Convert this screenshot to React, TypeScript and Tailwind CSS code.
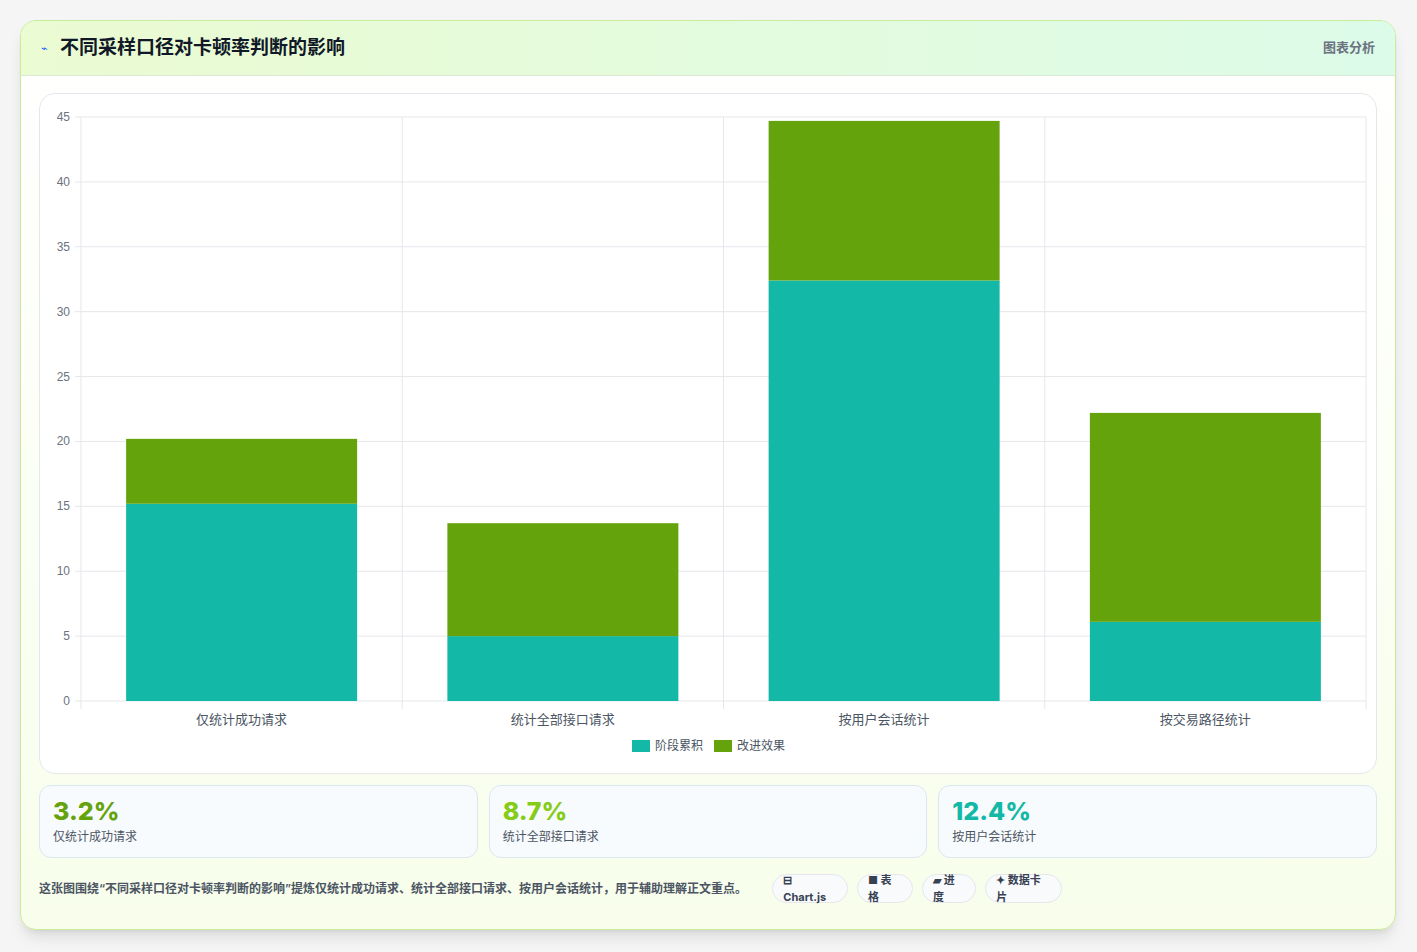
import React from "react";

const W = 1338, H = 680;
const x0 = 41, x1 = 1326, yTop = 23, yBot = 607;
const sc = (v: number) => yBot - (v / 45) * (yBot - yTop);
const cats = [
  { n: "仅统计成功请求", a: 15.2, t: 20.2 },
  { n: "统计全部接口请求", a: 5, t: 13.7 },
  { n: "按用户会话统计", a: 32.4, t: 44.7 },
  { n: "按交易路径统计", a: 6.1, t: 22.2 },
];

function Chart() {
  const cw = (x1 - x0) / 4;
  return (
    <svg width={W} height={H} style={{ fontFamily: "'Noto Sans CJK SC', sans-serif" }}>
      {[0, 5, 10, 15, 20, 25, 30, 35, 40, 45].map((v) => (
        <g key={v}>
          <line x1={x0 - 6} x2={x1} y1={sc(v)} y2={sc(v)} stroke="#e5e7eb" />
          <text x={30} y={sc(v) + 4} fontSize="12" fill="#6b7280" textAnchor="end" fontFamily="Liberation Sans, sans-serif">{v}</text>
        </g>
      ))}
      {[0, 1, 2, 3, 4].map((i) => (
        <line key={i} x1={x0 + i * cw} x2={x0 + i * cw} y1={yTop} y2={yBot + 8} stroke="#e5e7eb" />
      ))}
      {cats.map((c, i) => {
        const cx = x0 + cw * i + cw / 2;
        const bx = cx - 115.5;
        return (
          <g key={i}>
            <rect x={bx} y={sc(c.a)} width={231} height={yBot - sc(c.a)} fill="#14b8a6" />
            <rect x={bx} y={sc(c.t)} width={231} height={sc(c.a) - sc(c.t)} fill="#65a30d" />
            <text x={cx} y={630} fontSize="13" fill="#4b5563" textAnchor="middle">{c.n}</text>
          </g>
        );
      })}
      <rect x={592} y={646} width={18} height={12} fill="#14b8a6" />
      <text x={615} y={656} fontSize="12" fill="#4b5563">阶段累积</text>
      <rect x={674} y={646} width={18} height={12} fill="#65a30d" />
      <text x={697} y={656} fontSize="12" fill="#4b5563">改进效果</text>
    </svg>
  );
}

export default function App() {
  const f = { fontFamily: "Inter, 'Noto Sans CJK SC', sans-serif" };
  return (
    <div className="min-h-[952px] bg-[#f5f5f5] pt-[20px] pl-[20px] pr-[21px]" style={f}>
      <div className="w-[1376px] h-[910px] rounded-2xl border border-[#c9ec9a] overflow-hidden bg-gradient-to-b from-white to-[#f8feeb] shadow-lg">
        <div className="h-[55px] flex items-center justify-between px-5 bg-gradient-to-r from-[#ebfbd2] to-[#dcfbe8] border-b border-[#dbe8d6]">
          <div className="flex items-center gap-3">
            <span className="text-[11px] text-blue-600">⌁</span>
            <span className="text-[19px] font-bold text-[#111827]">不同采样口径对卡顿率判断的影响</span>
          </div>
          <span className="text-[13px] font-semibold text-[#6b7280]">图表分析</span>
        </div>
        <div className="px-[18px] pt-[17px]">
          <div className="h-[681px] rounded-2xl border border-[#e5e7eb] bg-white overflow-hidden">
            <Chart />
          </div>
          <div className="grid grid-cols-3 gap-[11px] mt-[11px]">
            {[
              ["3.2%", "text-[#65a30d]", "仅统计成功请求"],
              ["8.7%", "text-[#84cc16]", "统计全部接口请求"],
              ["12.4%", "text-[#14b8a6]", "按用户会话统计"],
            ].map(([v, c, l]) => (
              <div key={v} className="h-[73px] rounded-xl border border-[#dbe6f0] bg-[#f8fbfd] px-[13px] pt-[10px]">
                <div className={`text-[25px] leading-[30px] font-extrabold ${c}`}>{v}</div>
                <div className="text-[12px] text-[#4b5563] mt-[2px]">{l}</div>
              </div>
            ))}
          </div>
          <div className="flex items-center justify-between mt-[16px]">
            <p className="w-[740px] text-[12px] leading-[20px] font-semibold text-[#4b5563]">
              这张图围绕“不同采样口径对卡顿率判断的影响”提炼仅统计成功请求、统计全部接口请求、按用户会话统计，用于辅助理解正文重点。
            </p>
            <div className="flex gap-[9px] mr-[315px]">
              {["⊟ Chart.js", "■ 表格", "▰ 进度", "✦ 数据卡片"].map((t) => (
                <span key={t} className="h-[29px] px-[10px] flex items-center rounded-full border border-[#e5e7eb] bg-[#f8fafc] text-[11px] font-bold text-[#374151]">{t}</span>
              ))}
            </div>
          </div>
        </div>
      </div>
    </div>
  );
}
